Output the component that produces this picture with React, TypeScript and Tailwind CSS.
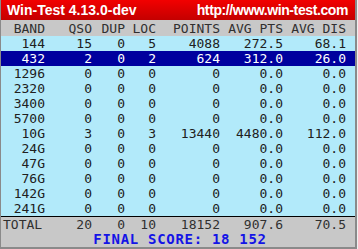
import React from 'react'

type Row = {
  band: string
  qso: string
  dup: string
  loc: string
  points: string
  avgPts: string
  avgDis: string
  active?: boolean
}

const rows: Row[] = [
  { band: '144', qso: '15', dup: '0', loc: '5', points: '4088', avgPts: '272.5', avgDis: '68.1' },
  { band: '432', qso: '2', dup: '0', loc: '2', points: '624', avgPts: '312.0', avgDis: '26.0', active: true },
  { band: '1296', qso: '0', dup: '0', loc: '0', points: '0', avgPts: '0.0', avgDis: '0.0' },
  { band: '2320', qso: '0', dup: '0', loc: '0', points: '0', avgPts: '0.0', avgDis: '0.0' },
  { band: '3400', qso: '0', dup: '0', loc: '0', points: '0', avgPts: '0.0', avgDis: '0.0' },
  { band: '5700', qso: '0', dup: '0', loc: '0', points: '0', avgPts: '0.0', avgDis: '0.0' },
  { band: '10G', qso: '3', dup: '0', loc: '3', points: '13440', avgPts: '4480.0', avgDis: '112.0' },
  { band: '24G', qso: '0', dup: '0', loc: '0', points: '0', avgPts: '0.0', avgDis: '0.0' },
  { band: '47G', qso: '0', dup: '0', loc: '0', points: '0', avgPts: '0.0', avgDis: '0.0' },
  { band: '76G', qso: '0', dup: '0', loc: '0', points: '0', avgPts: '0.0', avgDis: '0.0' },
  { band: '142G', qso: '0', dup: '0', loc: '0', points: '0', avgPts: '0.0', avgDis: '0.0' },
  { band: '241G', qso: '0', dup: '0', loc: '0', points: '0', avgPts: '0.0', avgDis: '0.0' },
]

function Cells({ r, first }: { r: Row; first?: 'left' }) {
  return (
    <>
      <span className={first === 'left' ? 'w-[44px] pl-[2px] text-left' : 'w-[44px] text-right'}>{r.band}</span>
      <span className="w-[47px] text-right">{r.qso}</span>
      <span className="w-[33px] text-right">{r.dup}</span>
      <span className="w-[31px] text-right">{r.loc}</span>
      <span className="w-[64px] text-right">{r.points}</span>
      <span className="w-[63px] text-right">{r.avgPts}</span>
      <span className="w-[63px] text-right">{r.avgDis}</span>
    </>
  )
}

export default function App() {
  return (
    <div className="h-[249px] w-[358px] bg-[#f0f0f0]">
      <div className="flex h-[249px] w-[357px] flex-col border-b-2 border-l border-r-2 border-[#8a8a8a] font-['DejaVu_Sans_Mono',monospace] text-[13px] leading-none">
        {/* title bar */}
        <div className="flex h-[20px] items-center justify-between bg-gradient-to-b from-[#f20000] to-[#c40000] pl-[6px] pr-[7px] font-['Liberation_Sans',Arial,sans-serif] text-[14px] font-bold text-white">
          <span>Win-Test 4.13.0-dev</span>
          <span className="tracking-[-0.4px]">http://www.win-test.com</span>
        </div>

        {/* header */}
        <div className="flex h-[16px] items-center bg-[#c8c8c8] text-[#303030]">
          <Cells
            r={{ band: 'BAND', qso: 'QSO', dup: 'DUP', loc: 'LOC', points: 'POINTS', avgPts: 'AVG PTS', avgDis: 'AVG DIS' }}
          />
        </div>

        {/* bands */}
        <div className="bg-[#b2eafa]">
          {rows.map((r) => (
            <div
              key={r.band}
              className={
                r.active
                  ? 'flex h-[15px] items-center bg-[#00009e] text-white'
                  : 'flex h-[15px] items-center text-[#202020]'
              }
            >
              <Cells r={r} />
            </div>
          ))}
        </div>

        {/* totals */}
        <div className="flex-1 border-t border-black bg-[#c8c8c8]">
          <div className="flex h-[15px] items-center text-[#303030]">
            <Cells
              r={{ band: 'TOTAL', qso: '20', dup: '0', loc: '10', points: '18152', avgPts: '907.6', avgDis: '70.5' }}
              first="left"
            />
          </div>
          <div className="flex h-[14px] items-center justify-center pl-[4px] text-[14px] font-bold tracking-[0.7px] text-[#1414e6]">
            FINAL SCORE: 18 152
          </div>
        </div>
      </div>
    </div>
  )
}
